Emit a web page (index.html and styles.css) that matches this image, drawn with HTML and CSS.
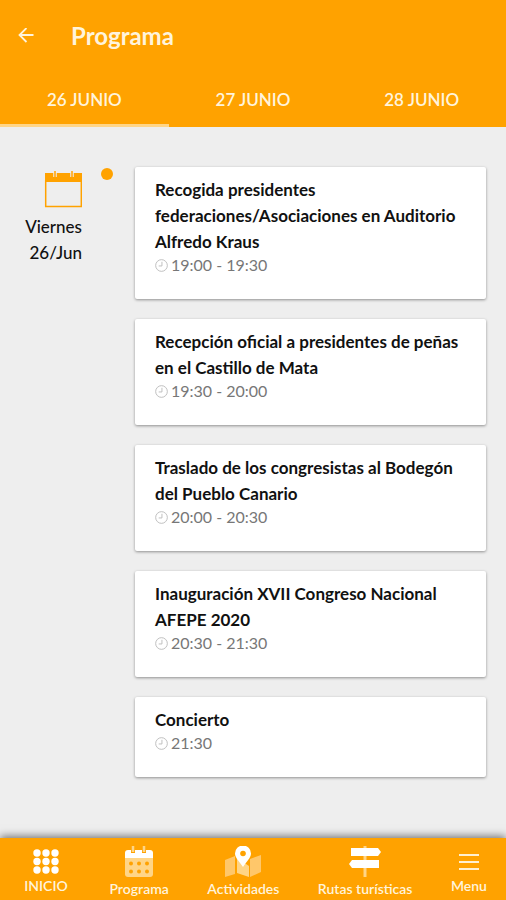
FILE: index.html
```html
<!DOCTYPE html>
<html lang="es">
<head>
<meta charset="utf-8">
<meta name="viewport" content="width=device-width, initial-scale=1">
<title>Programa</title>
<link rel="stylesheet" href="styles.css">
</head>
<body>
<svg class="sprite" aria-hidden="true">
  <symbol id="clock" viewBox="0 0 14 14">
    <circle cx="7" cy="7" r="6.300" fill="none" stroke="currentColor"/>
    <path d="M7.500 3v4.500H4" fill="none" stroke="currentColor"/>
  </symbol>
</svg>
<header class="header">
  <div class="bar">
    <button class="back" type="button" aria-label="Volver">
      <svg width="16" height="16" viewBox="0 0 16 16" fill="none" stroke="currentColor" stroke-width="1.800"><path d="M15.500 7H2M8.500 0L1.500 7l7 7"/></svg>
    </button>
    <h1 class="heading">Programa</h1>
  </div>
  <nav class="tabs">
    <a class="tab tab-active" href="#d26">26 JUNIO</a>
    <a class="tab" href="#d27">27 JUNIO</a>
    <a class="tab" href="#d28">28 JUNIO</a>
  </nav>
</header>
<main class="content" id="d26">
  <div class="day">
    <div class="date">
      <svg width="38" height="38" viewBox="0 0 38 38">
        <path d="M1 3h37v9H1z" fill="#ffa200"/>
        <path d="M1.700 10v26.500h35.600V10" fill="none" stroke="#ffa200" stroke-width="1.500"/>
        <path d="M11 0v7M28 0v7" stroke="#eee" stroke-width="3.500"/>
        <path d="M11 1v6M28 1v6" stroke="#ffb53a" stroke-width="2"/>
      </svg>
      <span>Viernes</span>
      <span>26/Jun</span>
    </div>
    <span class="dot"></span>
  </div>
  <div class="events">
    <article class="card">
      <h2 class="title">Recogida presidentes federaciones/Asociaciones en Auditorio Alfredo Kraus</h2>
      <p class="time"><svg class="clock"><use href="#clock"/></svg>19:00 - 19:30</p>
    </article>
    <article class="card">
      <h2 class="title">Recepción oficial a presidentes de peñas en el Castillo de Mata</h2>
      <p class="time"><svg class="clock"><use href="#clock"/></svg>19:30 - 20:00</p>
    </article>
    <article class="card">
      <h2 class="title">Traslado de los congresistas al Bodegón del Pueblo Canario</h2>
      <p class="time"><svg class="clock"><use href="#clock"/></svg>20:00 - 20:30</p>
    </article>
    <article class="card">
      <h2 class="title">Inauguración XVII Congreso Nacional AFEPE 2020</h2>
      <p class="time"><svg class="clock"><use href="#clock"/></svg>20:30 - 21:30</p>
    </article>
    <article class="card">
      <h2 class="title">Concierto</h2>
      <p class="time"><svg class="clock"><use href="#clock"/></svg>21:30</p>
    </article>
  </div>
</main>
<nav class="bottom">
  <a class="item item-raised item-home" href="#inicio">
    <svg width="26" height="32" viewBox="0 0 26 32" fill="#fff">
      <circle cx="4" cy="7" r="3.700"/><circle cx="13" cy="7" r="3.700"/><circle cx="22" cy="7" r="3.700"/>
      <circle cx="4" cy="15.500" r="3.700"/><circle cx="13" cy="15.500" r="3.700"/><circle cx="22" cy="15.500" r="3.700"/>
      <circle cx="4" cy="24" r="3.700"/><circle cx="13" cy="24" r="3.700"/><circle cx="22" cy="24" r="3.700"/>
    </svg>
    <span class="label">INICIO</span>
  </a>
  <a class="item" href="#programa">
    <svg width="30" height="32" viewBox="0 0 30 32">
      <path d="M1 11h28v17a3 3 0 0 1-3 3H4a3 3 0 0 1-3-3z" fill="#ffd587"/>
      <path d="M1 12V7a3 3 0 0 1 3-3h22a3 3 0 0 1 3 3v5z" fill="#fff"/>
      <path d="M9 1v6M20 1v6" stroke="#ffa200" stroke-width="4"/>
      <path d="M9 0v6M20 0v6" stroke="#ffd587" stroke-width="2.500"/>
      <g fill="#ffa200"><circle cx="7" cy="17.500" r="2"/><circle cx="15" cy="17.500" r="2"/><circle cx="23" cy="17.500" r="2"/><circle cx="7" cy="25.500" r="2"/><circle cx="15" cy="25.500" r="2"/><circle cx="23" cy="25.500" r="2"/></g>
    </svg>
    <span class="label">Programa</span>
  </a>
  <a class="item" href="#actividades">
    <svg width="38" height="32" viewBox="0 0 38 32">
      <path d="M1 14l10-4v18L1 31zM26 13l11-4v17l-11 5z" fill="#ffc76a"/>
      <path d="M13 12l12 8v11l-12-4z" fill="#ffd587"/>
      <path d="M19 21C16 16 11 12 11 7.500a8 8 0 0 1 16 0C27 12 22 16 19 21z" fill="#fff"/>
      <circle cx="19" cy="7.500" r="2.800" fill="#ffa200"/>
    </svg>
    <span class="label">Actividades</span>
  </a>
  <a class="item" href="#rutas">
    <svg width="34" height="32" viewBox="0 0 34 32">
      <path d="M17 0v31" stroke="#ffd587" stroke-width="3"/>
      <path d="M3 2h27l3 4-3 4H3zM31 14H4l-3 4 3 4h27z" fill="#fff"/>
    </svg>
    <span class="label">Rutas turísticas</span>
  </a>
  <a class="item item-raised" href="#menu">
    <svg width="22" height="32" viewBox="0 0 22 32" stroke="#fff0d0" stroke-width="2"><path d="M1 9h20M1 16h20M1 23h20"/></svg>
    <span class="label">Menu</span>
  </a>
</nav>
</body>
</html>
```

FILE: styles.css
```css
* { box-sizing: border-box; }
body {
  margin: 0;
  min-height: 100vh;
  display: flex;
  flex-direction: column;
  background: #eee;
  color: #111;
  font-family: Lato, sans-serif;
}
h1, h2, p { margin: 0; }
a { color: inherit; text-decoration: none; }
svg { display: block; flex: none; }
.sprite { position: absolute; width: 0; height: 0; }

.header { background: #ffa200; color: #fff4dc; }
.bar { display: flex; align-items: center; gap: 37px; height: 72px; padding: 0 18px; }
.back { padding: 0; border: 0; background: none; color: inherit; }
.heading { font-size: 24px; line-height: 32px; font-weight: 700; }
.tabs { display: grid; grid-template-columns: repeat(3, 1fr); }
.tab {
  height: 55px;
  border-bottom: 3px solid transparent;
  text-align: center;
  font-size: 17px;
  line-height: 55px;
  font-weight: 600;
}
.tab-active { border-color: #ffd587; }

.content { flex: 1; display: flex; padding: 40px 20px 60px 23px; }
.day { flex: none; width: 112px; display: flex; align-items: flex-start; gap: 19px; }
.date {
  width: 59px;
  padding-top: 3px;
  display: flex;
  flex-direction: column;
  align-items: flex-end;
  font-size: 17px;
  line-height: 26px;
  font-weight: 500;
}
.date svg { margin-bottom: 6px; }
.dot { width: 12px; height: 12px; margin-top: 1px; border-radius: 50%; background: #ffa200; }
.events { flex: 1; display: flex; flex-direction: column; gap: 20px; }
.card {
  padding: 10px 20px 24px;
  border-radius: 2px;
  background: #fff;
  box-shadow: 0 1px 3px rgba(0, 0, 0, 0.4);
}
.title { font-size: 17px; line-height: 26px; font-weight: 700; }
.time { display: flex; align-items: center; gap: 3px; color: #777; font-size: 16px; line-height: 20px; }
.clock { width: 13px; height: 13px; color: #bbb; }

.bottom {
  position: sticky;
  bottom: 0;
  display: flex;
  justify-content: space-between;
  padding: 8px 19px 3px 21px;
  background: #ffa200;
  color: #fff4dc;
  box-shadow: 0 -2px 8px rgba(0, 0, 0, 0.5);
}
.item { display: flex; flex-direction: column; align-items: center; gap: 3px; }
.item-raised { gap: 0; }
.item-home { min-width: 50px; }
.label { font-size: 14px; line-height: 16px; font-weight: 600; }
```
